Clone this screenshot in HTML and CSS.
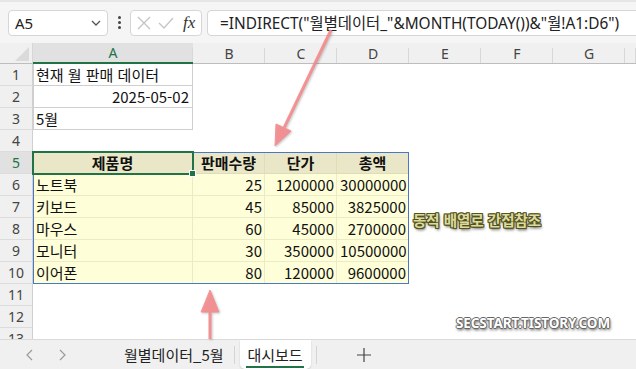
FILE: index.html
```html
<!DOCTYPE html>
<html lang="ko">
  <head>
    <meta charset="utf-8">
    <title>대시보드</title>
    <link rel="stylesheet" href="styles.css">
  </head>
  <body>

  <div class="toolbar">
    <div class="namebox">
      <span>A5</span>
      <svg class="chev" width="10" height="6" viewBox="0 0 10 6"><path d="M1 1 L5 5 L9 1" fill="none" stroke="#555" stroke-width="1.3"/></svg>
    </div>
    <div class="dots"><i></i><i></i><i></i></div>
    <div class="fxbox">
      <svg width="14" height="14" viewBox="0 0 14 14"><path d="M1 1 L13 13 M13 1 L1 13" stroke="#c4c4c4" stroke-width="1.3"/></svg>
      <svg width="16" height="12" viewBox="0 0 16 12"><path d="M1 6 L6 11 L15 1" fill="none" stroke="#c4c4c4" stroke-width="1.3"/></svg>
      <span class="fx">fx</span>
    </div>
    <div class="formula">=INDIRECT("월별데이터_"&amp;MONTH(TODAY())&amp;"월!A1:D6")</div>
  </div>

  <div class="sheet">
    <div class="corner">
      <svg width="14" height="14" viewBox="0 0 14 14"><path d="M14 0 L14 14 L0 14 Z" fill="#dadada"/></svg>
    </div>
    <div class="colhead active">A</div>
    <div class="colhead">B</div>
    <div class="colhead">C</div>
    <div class="colhead">D</div>
    <div class="colhead">E</div>
    <div class="colhead">F</div>
    <div class="colhead">G</div>
    <div class="colhead"></div>

    <div class="rowhead r1">1</div>
    <div class="rowhead r2">2</div>
    <div class="rowhead r3">3</div>
    <div class="rowhead r4">4</div>
    <div class="rowhead r5 active">5</div>
    <div class="rowhead r6">6</div>
    <div class="rowhead r7">7</div>
    <div class="rowhead r8">8</div>
    <div class="rowhead r9">9</div>
    <div class="rowhead r10">10</div>
    <div class="rowhead r11">11</div>
    <div class="rowhead r12">12</div>
    <div class="rowhead r13">13</div>

    <div class="cell boxed r1">현재 월 판매 데이터</div>
    <div class="cell boxed num r2">2025-05-02</div>
    <div class="cell boxed r3">5월</div>

    <div class="spill">
      <div class="th selected">제품명</div>
      <div class="th">판매수량</div>
      <div class="th">단가</div>
      <div class="th">총액</div>

      <div class="td">노트북</div><div class="td num">25</div><div class="td num">1200000</div><div class="td num">30000000</div>
      <div class="td">키보드</div><div class="td num">45</div><div class="td num">85000</div><div class="td num">3825000</div>
      <div class="td">마우스</div><div class="td num">60</div><div class="td num">45000</div><div class="td num">2700000</div>
      <div class="td">모니터</div><div class="td num">30</div><div class="td num">350000</div><div class="td num">10500000</div>
      <div class="td">이어폰</div><div class="td num">80</div><div class="td num">120000</div><div class="td num">9600000</div>
    </div>
  </div>

  <div class="tabbar">
    <svg class="nav" width="8" height="12" viewBox="0 0 8 12"><path d="M6 1 L1 6 L6 11" fill="none" stroke="#9a9a9a" stroke-width="1.2"/></svg>
    <svg class="nav" width="8" height="12" viewBox="0 0 8 12"><path d="M2 1 L7 6 L2 11" fill="none" stroke="#9a9a9a" stroke-width="1.2"/></svg>
    <div class="tab">월별데이터_5월</div>
    <span class="sep"></span>
    <div class="tab current"><span>대시보드</span></div>
    <span class="sep"></span>
    <svg class="plus" width="14" height="14" viewBox="0 0 14 14"><path d="M7 0 V14 M0 7 H14" stroke="#444" stroke-width="1.2"/></svg>
  </div>

  <!-- annotations drawn over the sheet -->
  <svg class="arrows" width="636" height="369" viewBox="0 0 636 369">
    <g fill="#f58a8c" stroke="#f58a8c" opacity="0.9">
      <line x1="331" y1="30" x2="284" y2="128" stroke-width="3"/>
      <polygon points="275,146 291,131 276,124" stroke-width="1"/>
      <line x1="210" y1="339" x2="210" y2="306" stroke-width="3"/>
      <polygon points="210,290 219,312 201,312" stroke-width="1"/>
    </g>
  </svg>
  <div class="note">동적 배열로 간접참조</div>
  <div class="mark">SECSTART.TISTORY.COM</div>

  </body>
</html>
```

FILE: styles.css
```css
html, body {
  margin: 0;
  padding: 0;
}
body {
  width: 636px;
  height: 369px;
  overflow: hidden;
  position: relative;
  background: #ffffff;
  color: #111;
  font-family: "Noto Sans", "Noto Sans CJK KR", sans-serif;
}

/* formula bar */
.toolbar {
  height: 43px;
  box-sizing: border-box;
  display: flex;
  align-items: center;
  padding-left: 8px;
  background: #f5f5f5;
  border-top: 2px solid #e6e6e6;
}
.namebox, .fxbox, .formula {
  height: 26px;
  box-sizing: border-box;
  background: #fff;
  border: 1px solid #d6d6d6;
  border-radius: 4px;
  display: flex;
  align-items: center;
}
.namebox {
  width: 100px;
  padding: 0 6px 0 6px;
  justify-content: space-between;
  font-size: 15px;
  color: #222;
}
.dots {
  width: 22px;
  display: flex;
  flex-direction: column;
  align-items: center;
  gap: 2px;
}
.dots i {
  width: 3px;
  height: 3px;
  background: #444;
  border-radius: 50%;
}
.fxbox {
  width: 72px;
  padding: 0 5px 0 6px;
  gap: 7px;
}
.fx {
  font-family: "Liberation Serif", serif;
  font-style: italic;
  font-size: 17px;
  color: #333;
  margin-left: 2px;
}
.formula {
  flex: 1;
  margin-left: 5px;
  margin-right: -10px;
  padding-left: 12px;
  font-size: 15.4px;
  color: #222;
  white-space: nowrap;
  font-family: "Noto Sans", "Noto Sans CJK KR", sans-serif;
}

/* grid */
.sheet {
  height: 296px;
  overflow: hidden;
  display: grid;
  grid-template-columns: 33px 160px 72px 72px 72px 72px 72px 72px 1fr;
  grid-template-rows: 21px repeat(13, 22px);
}
.corner {
  background: #f0f0f0;
  border-bottom: 1px solid #bdbdbd;
  border-right: 1px solid #d6d6d6;
  display: flex;
  align-items: flex-end;
  justify-content: flex-end;
  padding: 0 3px 2px 0;
  box-sizing: border-box;
}
.colhead {
  box-sizing: border-box;
  background: linear-gradient(#d8d8d8, #d8d8d8) right 5px / 1px calc(100% - 5px) no-repeat, #f0f0f0;
  border-bottom: 1px solid #bdbdbd;
  font-size: 14px;
  color: #444;
  display: flex;
  align-items: center;
  justify-content: center;
}
.colhead.active {
  background: linear-gradient(#d8d8d8, #d8d8d8) right 5px / 1px calc(100% - 5px) no-repeat, #e1e1e1;
  color: #217346;
  border-bottom: 2px solid #217346;
}
.rowhead {
  grid-column: 1;
  box-sizing: border-box;
  background: #f0f0f0;
  border-bottom: 1px solid #dcdcdc;
  border-right: 1px solid #d0d0d0;
  font-size: 14px;
  color: #444;
  display: flex;
  align-items: center;
  justify-content: center;
}
.rowhead.r13 {
  align-items: flex-start;
  padding-top: 1px;
}
.rowhead.active {
  background: #e1e1e1;
  color: #217346;
}
.r1 { grid-row: 2; }
.r2 { grid-row: 3; }
.r3 { grid-row: 4; }
.r4 { grid-row: 5; }
.r5 { grid-row: 6; }
.r6 { grid-row: 7; }
.r7 { grid-row: 8; }
.r8 { grid-row: 9; }
.r9 { grid-row: 10; }
.r10 { grid-row: 11; }
.r11 { grid-row: 12; }
.r12 { grid-row: 13; }
.r13 { grid-row: 14; }

.cell, .th, .td {
  box-sizing: border-box;
  font-family: "Noto Sans CJK KR", sans-serif;
  font-size: 15px;
  line-height: 21px;
  padding: 0 3px;
  white-space: nowrap;
  color: #111;
}
.cell {
  grid-column: 2;
}
.cell.boxed {
  border-right: 1px solid #cfcfcf;
  border-bottom: 1px solid #cfcfcf;
  border-left: 1px solid #cfcfcf;
  padding-left: 2px;
}
.num {
  text-align: right;
}

/* spilled range A5:D10 */
.spill {
  grid-column: 2 / 6;
  grid-row: 6 / 12;
  display: grid;
  grid-template-columns: 160px 72px 72px 72px;
  grid-template-rows: repeat(6, 22px);
  outline: 1px solid #4a78c8;
  outline-offset: -1px;
  background: #fefed8;
}
.th {
  background: #e9e7c7;
  font-weight: bold;
  text-align: center;
  border-right: 1px solid #ddddb8;
  border-bottom: 1px solid #ddddb8;
}
.td {
  border-right: 1px solid #ecebc8;
  border-bottom: 1px solid #ecebc8;
}
.td.num {
  padding-right: 2px;
}
.th.selected {
  position: relative;
  outline: 2px solid #217346;
  outline-offset: -1px;
}
.th.selected::after {
  content: "";
  position: absolute;
  right: -4px;
  bottom: -4px;
  width: 5px;
  height: 5px;
  background: #217346;
  border: 1px solid #fff;
}

/* sheet tabs */
.tabbar {
  height: 30px;
  box-sizing: border-box;
  background: #f0f0f0;
  border-top: 1px solid #dadada;
  display: flex;
  align-items: center;
}
.nav {
  margin-left: 26px;
}
.nav + .nav {
  margin-left: 24px;
}
.tab {
  font-family: "Noto Sans CJK KR", sans-serif;
  font-size: 15px;
  color: #222;
  margin-left: 58px;
}
.tab.current {
  margin-left: 5px;
  align-self: stretch;
  width: 71px;
  background: #fff;
  border-radius: 0 0 5px 5px;
  box-shadow: 0 1px 2px rgba(0,0,0,0.15);
  display: flex;
  justify-content: center;
  align-items: center;
}
.tab.current span {
  border-bottom: 2px solid #217346;
  line-height: 22px;
  padding: 0 1px;
  margin-top: 2px;
}
.sep {
  width: 1px;
  height: 18px;
  background: #d4d4d4;
  margin-left: 10px;
}
.tab.current + .sep {
  margin-left: 5px;
}
.plus {
  margin-left: 40px;
}

/* overlays */
.arrows {
  position: absolute;
  left: 0;
  top: 0;
  pointer-events: none;
  filter: drop-shadow(1px 1px 1px rgba(0,0,0,0.25));
}
.note {
  position: absolute;
  left: 413px;
  top: 209px;
  font-family: "Noto Sans CJK KR", sans-serif;
  font-weight: bold;
  font-size: 14.5px;
  color: #dcdaa2;
  text-shadow: 1px 0 0 #54541a, -1px 0 0 #54541a, 0 1px 0 #54541a, 0 -1px 0 #54541a,
    1px 1px 0 #54541a, -1px -1px 0 #54541a, 1px -1px 0 #54541a, -1px 1px 0 #54541a,
    1px 2px 3px #333;
}
.mark {
  position: absolute;
  left: 456px;
  top: 314px;
  font-family: "Noto Sans", sans-serif;
  font-weight: bold;
  font-size: 13.5px;
  letter-spacing: -0.1px;
  color: #fff;
  text-shadow: 1px 0 0 #666, -1px 0 0 #666, 0 1px 0 #666, 0 -1px 0 #666,
    1px 2px 3px #444;
}
```
